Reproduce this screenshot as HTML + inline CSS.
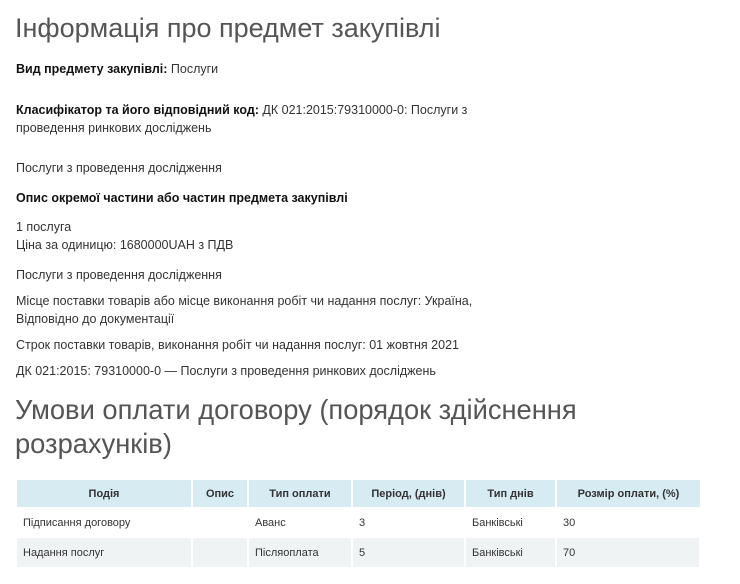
<!DOCTYPE html>
<html><head><meta charset="utf-8"><style>
body{margin:0;width:740px;height:584px;background:#fff;font-family:"Liberation Sans",sans-serif;color:#333;position:relative;overflow:hidden}
.t{position:absolute;left:16px;font-size:12.5px;line-height:18px;white-space:nowrap}
h1,h2{position:absolute;left:15px;margin:0;font-weight:normal;color:#555;white-space:nowrap}
h1{font-size:27px;top:11px;line-height:34px}
h2{font-size:27.3px;top:393px;line-height:34px}
b{font-weight:bold;color:#111}
table{position:absolute;left:17px;top:480px;width:683px;border-collapse:collapse;font-size:11px;table-layout:fixed}
th{background:#d7ebf2;height:27px;padding:0;font-weight:bold;color:#333;border-right:2px solid #fff}
td{height:31px;padding:0 0 0 6px;border-right:2px solid #fff;overflow:hidden;white-space:nowrap}
tr.g td{background:#f0f3f3;height:29px}
</style></head><body>
<h1>Інформація про предмет закупівлі</h1>
<div class="t" style="top:60px"><b>Вид предмету закупівлі:</b> Послуги</div>
<div class="t" style="top:101px"><b>Класифікатор та його відповідний код:</b> ДК 021:2015:79310000-0: Послуги з<br>проведення ринкових досліджень</div>
<div class="t" style="top:159px">Послуги з проведення дослідження</div>
<div class="t" style="top:189px"><b>Опис окремої частини або частин предмета закупівлі</b></div>
<div class="t" style="top:218px">1 послуга<br>Ціна за одиницю: 1680000UAH з ПДВ</div>
<div class="t" style="top:266px">Послуги з проведення дослідження</div>
<div class="t" style="top:292px">Місце поставки товарів або місце виконання робіт чи надання послуг: Україна,<br>Відповідно до документації</div>
<div class="t" style="top:336px">Строк поставки товарів, виконання робіт чи надання послуг: 01 жовтня 2021</div>
<div class="t" style="top:362px">ДК 021:2015: 79310000-0 — Послуги з проведення ринкових досліджень</div>
<h2>Умови оплати договору (порядок здійснення<br>розрахунків)</h2>
<table>
<colgroup><col style="width:175px"><col style="width:56px"><col style="width:104px"><col style="width:113px"><col style="width:91px"><col style="width:144px"></colgroup>
<tr><th>Подія</th><th>Опис</th><th>Тип оплати</th><th>Період, (днів)</th><th>Тип днів</th><th style="border:0">Розмір оплати, (%)</th></tr>
<tr><td>Підписання договору</td><td></td><td>Аванс</td><td>3</td><td>Банківські</td><td>30</td></tr>
<tr class="g"><td>Надання послуг</td><td></td><td>Післяоплата</td><td>5</td><td>Банківські</td><td>70</td></tr>
</table>
</body></html>
